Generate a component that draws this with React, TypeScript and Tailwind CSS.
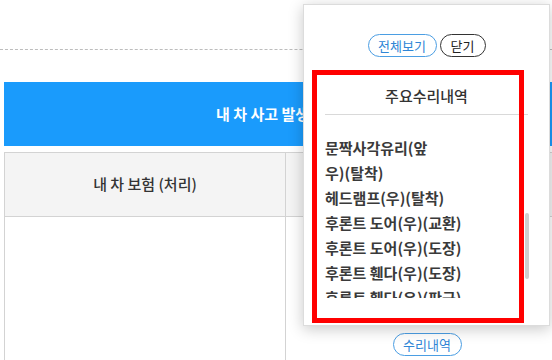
import React from 'react'

// ─── DATA ───────────────────────────────────────────────────────────────────
const repairs: string[] = [
  '헤드램프(우)(탈착)',
  '후론트 도어(우)(교환)',
  '후론트 도어(우)(도장)',
  '후론트 휀다(우)(도장)',
  '후론트 휀다(우)(판금)',
  '후론트 범퍼(교환)',
]

const font = { fontFamily: '"Noto Sans CJK KR", "Noto Sans", sans-serif' }

// ─── POPUP ──────────────────────────────────────────────────────────────────
const RepairPopup = () => (
  <div className="absolute left-[303px] top-[4px] w-[247px] h-[322px] bg-white border border-[#dcdcdc] shadow-[0_3px_14px_rgba(0,0,0,0.22)] flex flex-col px-[21px] pt-[29px]">
    <div className="flex justify-center gap-[3px]">
      <button className="h-[23px] w-[69px] rounded-full border border-[#4b9ee3] text-[#2f86d6] text-[13px] leading-none bg-white">
        전체보기
      </button>
      <button className="h-[23px] w-[46px] rounded-full border border-[#333] text-[#222] text-[13px] leading-none bg-white">
        닫기
      </button>
    </div>

    <div className="mt-[29px] pb-[8px] border-b border-[#d9d9d9] text-center text-[15px] leading-[20px] font-medium text-[#333]">
      주요수리내역
    </div>

    <div className="h-[183px] overflow-hidden pt-[20px] text-[15px] leading-[25px] font-semibold text-[#3a3a3a]">
      <p>문짝사각유리(앞</p>
      <p>우)(탈착)</p>
      {repairs.map((r, i) => (
        <p key={i} className="whitespace-nowrap">{r}</p>
      ))}
    </div>

    {/* 스크롤바 */}
    <div className="absolute left-[221px] top-[208px] w-[4px] h-[66px] rounded-full bg-[#cfcfcf]" />
  </div>
)

// ─── MAIN ───────────────────────────────────────────────────────────────────
export default function App() {
  return (
    <div className="relative w-[552px] h-[360px] overflow-hidden bg-white" style={font}>
      <div className="h-[50px] border-b border-dashed border-[#bdbdbd]" />

      <div className="mt-[32px] ml-[4px] w-[564px] h-[64px] bg-[#1a9bfc] text-white flex items-center pl-[212px] text-[15px] font-bold">
        내 차 사고 발생 (1건)
      </div>

      <div className="mt-[6px] ml-[4px] w-[564px] border-l border-t border-[#d3d3d3]">
        <div className="flex h-[64px] bg-[#f4f4f4] border-b border-[#d3d3d3]">
          <div className="w-[281px] border-r border-[#d3d3d3] flex items-center justify-center text-[15px] font-medium text-[#333]">
            내 차 보험 (처리)
          </div>
          <div className="flex-1 flex items-center justify-center text-[15px] font-medium text-[#333]">
            상대 차 보험 (처리)
          </div>
        </div>
        <div className="flex h-[160px]">
          <div className="w-[281px] border-r border-[#d3d3d3]" />
          <div className="flex-1 flex justify-center pt-[116px]">
            <button className="h-[23px] w-[69px] rounded-full border border-[#4b9ee3] text-[#2f86d6] text-[13px] leading-none bg-white">
              수리내역
            </button>
          </div>
        </div>
      </div>

      <RepairPopup />

      {/* 강조 표시 */}
      <div className="absolute left-[312px] top-[70px] w-[212px] h-[253px] border-[5px] border-[#ff0000] pointer-events-none" />
    </div>
  )
}
